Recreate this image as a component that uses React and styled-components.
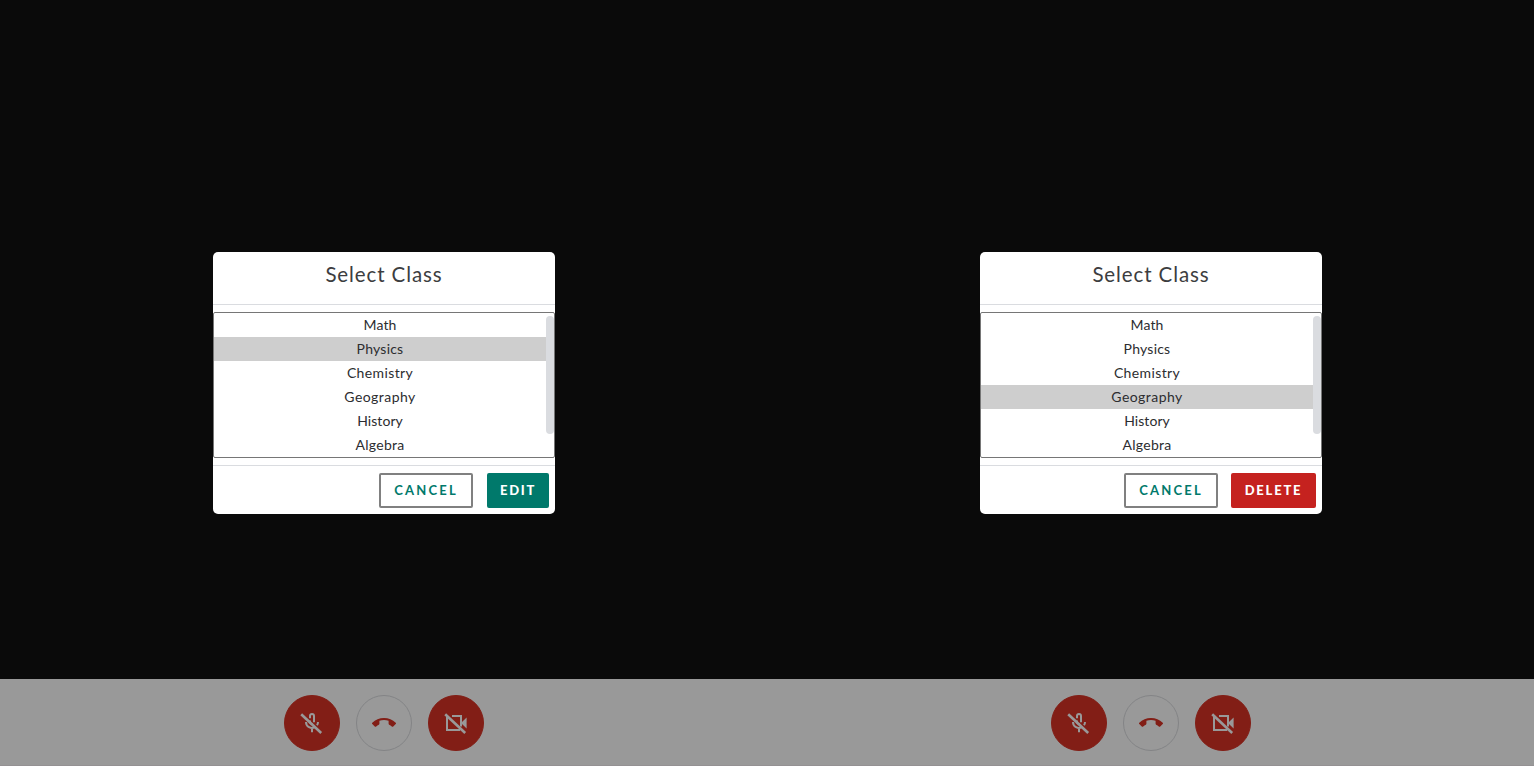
import React from "react";
import styled, { createGlobalStyle } from "styled-components";

const GlobalStyle = createGlobalStyle`
  * { box-sizing: border-box; }
  body { margin: 0; background: #0a0a0a; overflow: hidden; }
`;

const Screen = styled.main`
  display: grid;
  grid-template-columns: 767px 767px;
  width: 1534px;
  height: 766px;
  font-family: Lato, "Open Sans", sans-serif;
`;

const Panel = styled.section`
  display: grid;
  grid-template-rows: 679px 87px;
`;

const Stage = styled.div`
  padding: 252px 212px 0 213px;
  background: #0a0a0a;
`;

const Dialog = styled.div`
  display: flex;
  flex-direction: column;
  height: 262px;
  border-radius: 5px;
  background: #fff;
  overflow: hidden;
`;

const Header = styled.header`
  height: 53px;
  padding-top: 10px;
  border-bottom: 1px solid #dadce0;
  text-align: center;
`;

const Title = styled.h2`
  margin: 0;
  font-size: 20.5px;
  line-height: 24px;
  font-weight: 400;
  letter-spacing: 0.9px;
  color: #3c3d40;
`;

const List = styled.div`
  display: grid;
  grid-template-columns: 1fr 8px;
  height: 146px;
  margin: 7px 0;
  border: 1px solid #767676;
  border-radius: 2px;
`;

const Options = styled.ul`
  margin: 0;
  padding: 0;
  list-style: none;
`;

const Option = styled.li`
  height: 24px;
  line-height: 24px;
  font-size: 14px;
  letter-spacing: ${(p) => p.$tracking}px;
  text-align: center;
  color: #2c2d30;
  background: ${(p) => (p.$selected ? "#cecece" : "transparent")};
`;

const Thumb = styled.div`
  height: 118px;
  margin-top: 3px;
  border-radius: 4px;
  background: #dadce0;
`;

const Actions = styled.footer`
  display: flex;
  justify-content: flex-end;
  gap: ${(p) => p.$gap}px;
  padding: 7px 6px 6px;
  border-top: 1px solid #dadce0;
`;

const Button = styled.button`
  width: ${(p) => p.$width}px;
  height: 35px;
  padding: 0;
  border: 2px solid ${(p) => p.$border};
  border-radius: 2px;
  background: ${(p) => p.$fill};
  color: ${(p) => p.$ink};
  font-family: inherit;
  font-size: 13px;
  font-weight: ${(p) => p.$weight};
  line-height: 31px;
  letter-spacing: ${(p) => p.$tracking}px;
`;

const CallBar = styled.div`
  display: flex;
  justify-content: center;
  gap: 16px;
  padding: 16px 0 0 1px;
  background: #999;
  border-bottom: 1px solid #949193;
`;

const CallButton = styled.button`
  display: flex;
  align-items: center;
  justify-content: center;
  width: 56px;
  height: 56px;
  padding: 0;
  border: 1px solid ${(p) => (p.$danger ? "#821e16" : "#838486")};
  border-radius: 50%;
  background: ${(p) => (p.$danger ? "#821e16" : "#999")};
  color: ${(p) => (p.$danger ? "#999" : "#821e16")};
`;

const Icon = styled.svg`
  width: 24px;
  height: 24px;
  display: block;
`;

const MicOff = () => (
  <Icon viewBox="0 0 24 24" fill="none" stroke="currentColor" strokeWidth="2">
    <path d="M10 7.2V5a2 2 0 0 1 4 0v6.2M10 9.5V11a2 2 0 0 0 3 1.75M6 11a6 6 0 0 0 9 5.2M18 11a6 6 0 0 1-1 3.2M12 17v4.2" />
    <path d="M1.2 3.2 21.2 22" strokeWidth="2.6" />
  </Icon>
);

const HangUp = () => (
  <Icon viewBox="0 0 24 24" fill="currentColor">
    <path d="M12 9c-1.6 0-3.15.25-4.6.72v3.1c0 .39-.23.74-.56.9-.98.49-1.87 1.12-2.66 1.85-.18.18-.43.28-.7.28-.28 0-.53-.11-.71-.29L.29 13.08c-.18-.17-.29-.42-.29-.7 0-.28.11-.53.29-.71C3.34 8.78 7.46 7 12 7s8.66 1.78 11.71 4.67c.18.18.29.43.29.71 0 .28-.11.53-.29.71l-2.48 2.48c-.18.18-.43.29-.71.29-.27 0-.52-.11-.7-.28-.79-.74-1.69-1.36-2.67-1.85-.33-.16-.56-.5-.56-.9v-3.1C15.15 9.25 13.6 9 12 9z" />
  </Icon>
);

const CameraOff = () => (
  <Icon viewBox="0 0 24 24" fill="none" stroke="currentColor" strokeWidth="2">
    <path d="M3 5.5V19h13.2M8 5h9v10.5" />
    <path d="M17.5 11.5 22.6 6.5v11l-5.1-5z" fill="currentColor" stroke="none" />
    <path d="M1.2 3.2 21.2 22" strokeWidth="2.6" />
  </Icon>
);

const CLASSES = [
  ["Math", 0.12],
  ["Physics", 0.22],
  ["Chemistry", 0.38],
  ["Geography", 0.44],
  ["History", 0.05],
  ["Algebra", 0.28],
];

function ClassPanel({ selected, gap, action }) {
  return (
    <Panel>
      <Stage>
        <Dialog role="dialog">
          <Header>
            <Title>Select Class</Title>
          </Header>
          <List>
            <Options>
              {CLASSES.map(([name, tracking]) => (
                <Option key={name} $tracking={tracking} $selected={name === selected}>
                  {name}
                </Option>
              ))}
            </Options>
            <Thumb />
          </List>
          <Actions $gap={gap}>
            <Button $width={94} $border="#808080" $fill="#fff" $ink="#00796b" $weight={700} $tracking={2.2}>
              CANCEL
            </Button>
            <Button $width={action.width} $border={action.color} $fill={action.color} $ink="#fff" $weight={900} $tracking={action.tracking}>
              {action.label}
            </Button>
          </Actions>
        </Dialog>
      </Stage>
      <CallBar>
        <CallButton $danger aria-label="Unmute">
          <MicOff />
        </CallButton>
        <CallButton aria-label="Hang up">
          <HangUp />
        </CallButton>
        <CallButton $danger aria-label="Start camera">
          <CameraOff />
        </CallButton>
      </CallBar>
    </Panel>
  );
}

export default function App() {
  return (
    <>
      <GlobalStyle />
      <Screen>
        <ClassPanel
          selected="Physics"
          gap={14}
          action={{ label: "EDIT", color: "#00796b", width: 62, tracking: 1.7 }}
        />
        <ClassPanel
          selected="Geography"
          gap={13}
          action={{ label: "DELETE", color: "#c5221f", width: 85, tracking: 1.8 }}
        />
      </Screen>
    </>
  );
}
